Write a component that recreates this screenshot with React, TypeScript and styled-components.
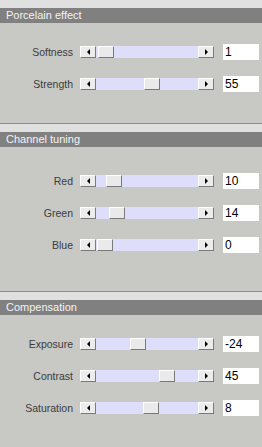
import React from "react";
import styled, { createGlobalStyle } from "styled-components";

const Global = createGlobalStyle`
  html, body { margin: 0; padding: 0; background: #c8c8c4; }
  body { width: 262px; height: 447px; overflow: hidden; font-family: "Liberation Sans", Arial, sans-serif; }
`;

const Page = styled.div`
  width: 262px;
  height: 447px;
  background: #c8c8c4;
  display: flex;
  flex-direction: column;
`;

const Section = styled.section<{ $first?: boolean }>`
  display: flex;
  flex-direction: column;
  border-top: ${(p) => (p.$first ? "none" : "1px solid #8e8e8e")};
`;

const Strip = styled.div`
  height: 8px;
  background: #e0e0e0;
`;

const Header = styled.div`
  height: 15px;
  background: #808080;
  color: #f4f4f4;
  font-size: 11px;
  line-height: 15px;
  padding-left: 6px;
  white-space: nowrap;
`;

const Body = styled.div<{ $top: number; $bottom: number }>`
  display: flex;
  flex-direction: column;
  padding-top: ${(p) => p.$top}px;
  padding-bottom: ${(p) => p.$bottom}px;
`;

const Row = styled.div`
  height: 32px;
  display: flex;
  align-items: center;
`;

const Label = styled.div`
  width: 73px;
  padding-right: 7px;
  text-align: right;
  font-size: 10.5px;
  color: #3c3c3c;
  white-space: nowrap;
`;

const Slider = styled.div`
  width: 134px;
  height: 12px;
  display: flex;
  background: #dedefa;
`;

const Track = styled.div`
  flex: 1;
  position: relative;
  background: #dedefa;
`;

const bevel = `
  box-sizing: border-box;
  background: #ececec;
  border-top: 1px solid #ffffff;
  border-left: 1px solid #ffffff;
  border-bottom: 1px solid #7a7a7a;
  border-right: 1px solid #7a7a7a;
`;

const ArrowButton = styled.div`
  ${bevel}
  width: 16px;
  height: 12px;
  display: flex;
  align-items: center;
  justify-content: center;
`;

const Arrow = styled.div<{ $dir: "left" | "right" }>`
  width: 0;
  height: 0;
  border-top: 3px solid transparent;
  border-bottom: 3px solid transparent;
  ${(p) =>
    p.$dir === "left"
      ? "border-right: 3px solid #000;"
      : "border-left: 3px solid #000;"}
`;

const Thumb = styled.div`
  ${bevel}
  position: absolute;
  top: 0;
  width: 16px;
  height: 12px;
  background: #eaeaea;
`;

const ValueBox = styled.div`
  margin-left: 9px;
  width: 36px;
  height: 16px;
  box-sizing: border-box;
  background: #ffffff;
  color: #000;
  font-size: 12px;
  line-height: 16px;
  padding-left: 2px;
`;

type Item = { label: string; value: number };

const TRAVEL = 86;

function SliderRow({ label, value, min, max }: Item & { min: number; max: number }) {
  const pos = Math.round(((value - min) / (max - min)) * TRAVEL);
  return (
    <Row>
      <Label>{label}</Label>
      <Slider>
        <ArrowButton>
          <Arrow $dir="left" />
        </ArrowButton>
        <Track>
          <Thumb style={{ left: pos + 1 }} />
        </Track>
        <ArrowButton>
          <Arrow $dir="right" />
        </ArrowButton>
      </Slider>
      <ValueBox>{value}</ValueBox>
    </Row>
  );
}

const sections = [
  {
    title: "Porcelain effect",
    min: 0,
    max: 100,
    top: 13,
    bottom: 23,
    items: [
      { label: "Softness", value: 1 },
      { label: "Strength", value: 55 },
    ],
  },
  {
    title: "Channel tuning",
    min: 0,
    max: 100,
    top: 18,
    bottom: 30,
    items: [
      { label: "Red", value: 10 },
      { label: "Green", value: 14 },
      { label: "Blue", value: 0 },
    ],
  },
  {
    title: "Compensation",
    min: -100,
    max: 100,
    top: 13,
    bottom: 23,
    items: [
      { label: "Exposure", value: -24 },
      { label: "Contrast", value: 45 },
      { label: "Saturation", value: 8 },
    ],
  },
];

export default function App() {
  return (
    <>
      <Global />
      <Page>
        {sections.map((s, i) => (
          <Section key={s.title} $first={i === 0}>
            <Strip />
            <Header>{s.title}</Header>
            <Body $top={s.top} $bottom={s.bottom}>
              {s.items.map((it) => (
                <SliderRow key={it.label} {...it} min={s.min} max={s.max} />
              ))}
            </Body>
          </Section>
        ))}
      </Page>
    </>
  );
}
